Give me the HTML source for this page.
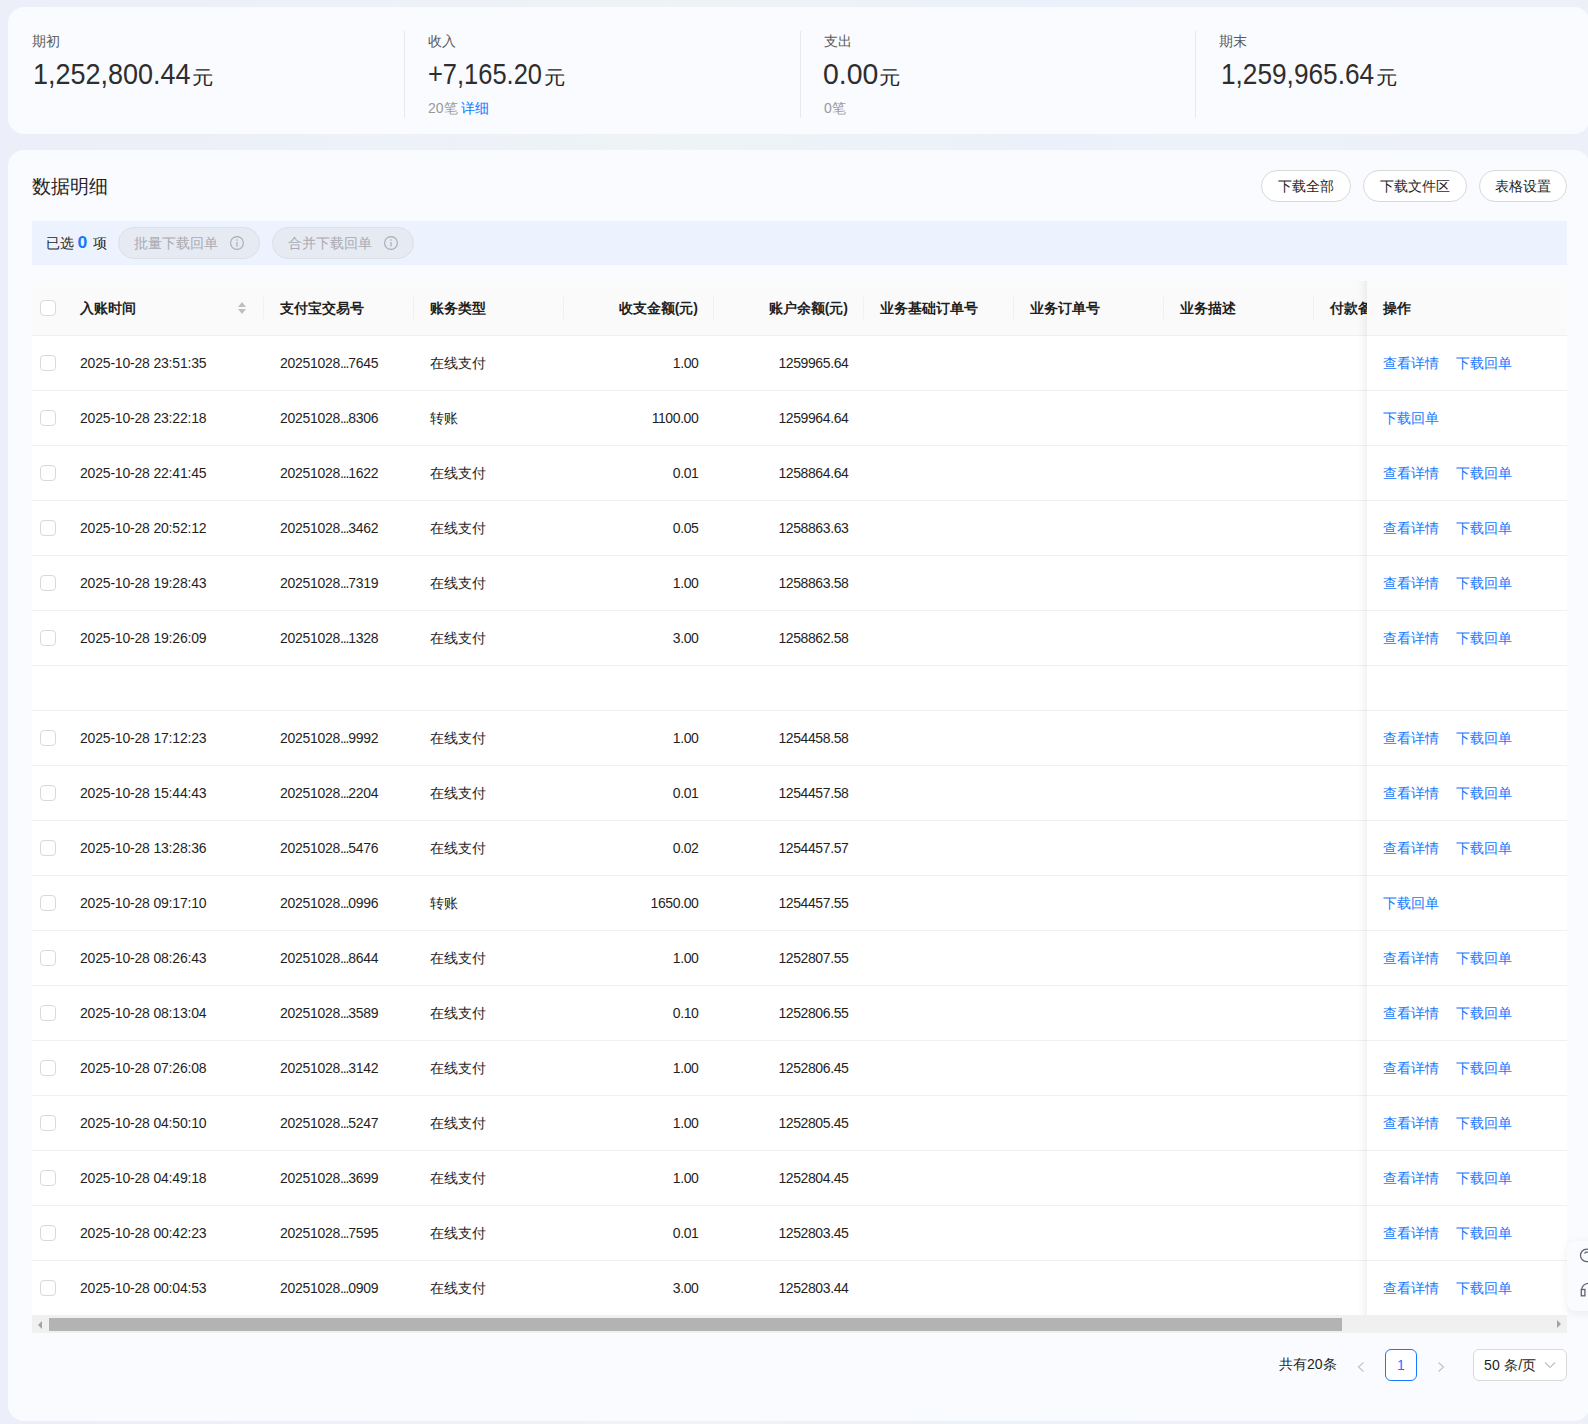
<!DOCTYPE html>
<html><head><meta charset="utf-8">
<style>
*{box-sizing:border-box;margin:0;padding:0}
html,body{width:1588px;height:1424px;overflow:hidden}
body{font-family:"Liberation Sans",sans-serif;background:linear-gradient(90deg,#eceef9 0%,#edf1f8 25%,#eef3f5 42%,#ebf1fa 65%,#eef0f9 100%);position:relative;color:#1f1f1f;font-size:14px}
.abs{position:absolute}
.card{position:absolute;background:#fafbfe;border-radius:16px}
#c1{left:8px;top:7px;width:1582px;height:127px}
#c2{left:8px;top:150px;width:1582px;height:1271px}
.div{position:absolute;top:31px;width:1px;height:87px;background:#e8e9ee}
.lbl{position:absolute;top:30.5px;font-size:14px;color:#595959;line-height:20px;white-space:nowrap}
.num{position:absolute;top:54px;font-size:30px;color:#2e2e2e;line-height:40px;white-space:nowrap;transform-origin:0 0}
.yy{position:absolute;top:64px;font-size:20px;line-height:30px;color:#262626;transform:scale(1.05,0.93);transform-origin:0 0}
.sub{position:absolute;top:100px;font-size:14px;color:#999;line-height:16px;white-space:nowrap}
.sub a{color:#1677ff;text-decoration:none}
.btn{position:absolute;top:170px;height:32px;border:1px solid #d9d9d9;border-radius:16px;background:#fff;font-size:14px;line-height:30px;text-align:center;color:#1f1f1f}
#bar{left:32px;top:221px;width:1535px;height:44px;background:#edf3fe}
.pill{position:absolute;top:227px;height:32px;border:1px solid #dcdfe6;border-radius:16px;background:#e6eaf3;color:#a8abb3;font-size:14px;line-height:30px;white-space:nowrap}
#thead{left:32px;top:281px;width:1535px;height:55px;background:#fafafa;border-bottom:1px solid #f0f0f0;border-radius:8px 0 0 0}
.th{position:absolute;top:300px;font-weight:bold;font-size:14px;line-height:16px;white-space:nowrap;color:#1f1f1f}
.sep{position:absolute;top:297px;width:1px;height:22px;background:#f0f0f0}
.row{position:absolute;left:32px;width:1535px;background:#fff;border-bottom:1px solid #f0f0f0}
.cb{position:absolute;left:8px;width:16px;height:16px;border:1px solid #d9d9d9;border-radius:4px;background:#fff}
.td{position:absolute;line-height:16px;white-space:nowrap;font-size:14px;color:#1f1f1f}
.r{text-align:right}
.lk{color:#1677ff}
</style></head><body>
<div class="card" id="c1"></div>
<div class="div" style="left:404px"></div>
<div class="div" style="left:800px"></div>
<div class="div" style="left:1195px"></div>
<div class="lbl" style="left:32px">期初</div>
<div class="num" style="left:33.2px;transform:scaleX(0.899)">1,252,800.44</div>
<div class="yy" style="left:191.7px">元</div>
<div class="lbl" style="left:428px">收入</div>
<div class="num" style="left:428px;transform:scaleX(0.849)">+7,165.20</div>
<div class="yy" style="left:544px">元</div>
<div class="sub" style="left:428px">20笔 <a>详细</a></div>
<div class="lbl" style="left:824px">支出</div>
<div class="num" style="left:822.9px;transform:scaleX(0.946)">0.00</div>
<div class="yy" style="left:879.4px">元</div>
<div class="sub" style="left:824px">0笔</div>
<div class="lbl" style="left:1219px">期末</div>
<div class="num" style="left:1220.9px;transform:scaleX(0.874)">1,259,965.64</div>
<div class="yy" style="left:1375.9px">元</div>

<div class="card" id="c2"></div>
<div class="abs" style="left:32px;top:176px;font-size:18.5px;line-height:22px;color:#1f1f1f">数据明细</div>
<div class="btn" style="left:1261px;width:90px">下载全部</div>
<div class="btn" style="left:1363px;width:104px">下载文件区</div>
<div class="btn" style="left:1479px;width:88px">表格设置</div>

<div class="abs" id="bar"></div>
<div class="abs" style="left:46px;top:234px;font-size:14px;line-height:18px;white-space:nowrap">已选 <b style="color:#1677ff;font-size:16px;display:inline-block;transform:scaleX(1.1);margin:0 1.5px 0 0.5px">0</b> 项</div>
<div class="pill" style="left:118px;width:142px;padding-left:15px">批量下载回单</div>
<svg class="abs" style="left:230px;top:236px" width="14" height="14" viewBox="0 0 14 14"><circle cx="7" cy="7" r="6.4" fill="none" stroke="#a8abb3" stroke-width="1.1"/><path d="M7 6 V10.5" stroke="#a8abb3" stroke-width="1.2"/><circle cx="7" cy="4" r="0.8" fill="#a8abb3"/></svg>
<div class="pill" style="left:272px;width:142px;padding-left:15px">合并下载回单</div>
<svg class="abs" style="left:384px;top:236px" width="14" height="14" viewBox="0 0 14 14"><circle cx="7" cy="7" r="6.4" fill="none" stroke="#a8abb3" stroke-width="1.1"/><path d="M7 6 V10.5" stroke="#a8abb3" stroke-width="1.2"/><circle cx="7" cy="4" r="0.8" fill="#a8abb3"/></svg>

<div class="abs" id="thead"></div>
<div class="cb" style="left:40px;top:300px"></div>
<div class="th" style="left:80px">入账时间</div>
<svg class="abs" style="left:237px;top:301px" width="10" height="14" viewBox="0 0 10 14"><path d="M1 6 L5 1 L9 6 Z M1 8 L5 13 L9 8 Z" fill="#bfbfbf"/></svg>
<div class="sep" style="left:263px"></div>
<div class="th" style="left:280px">支付宝交易号</div>
<div class="sep" style="left:413px"></div>
<div class="th" style="left:430px">账务类型</div>
<div class="sep" style="left:563px"></div>
<div class="th" style="right:890px;text-align:right">收支金额(元)</div>
<div class="sep" style="left:713px"></div>
<div class="th" style="right:740px;text-align:right">账户余额(元)</div>
<div class="sep" style="left:863px"></div>
<div class="th" style="left:880px">业务基础订单号</div>
<div class="sep" style="left:1013px"></div>
<div class="th" style="left:1030px">业务订单号</div>
<div class="sep" style="left:1163px"></div>
<div class="th" style="left:1180px">业务描述</div>
<div class="sep" style="left:1313px"></div>
<div class="th" style="left:1330px">付款备注</div>
<div id="rows">
<div class="row" style="top:336px;height:55px"></div>
<div class="row" style="top:391px;height:55px"></div>
<div class="row" style="top:446px;height:55px"></div>
<div class="row" style="top:501px;height:55px"></div>
<div class="row" style="top:556px;height:55px"></div>
<div class="row" style="top:611px;height:55px"></div>
<div class="row" style="top:666px;height:45px"></div>
<div class="row" style="top:711px;height:55px"></div>
<div class="row" style="top:766px;height:55px"></div>
<div class="row" style="top:821px;height:55px"></div>
<div class="row" style="top:876px;height:55px"></div>
<div class="row" style="top:931px;height:55px"></div>
<div class="row" style="top:986px;height:55px"></div>
<div class="row" style="top:1041px;height:55px"></div>
<div class="row" style="top:1096px;height:55px"></div>
<div class="row" style="top:1151px;height:55px"></div>
<div class="row" style="top:1206px;height:55px"></div>
<div class="row" style="top:1261px;height:55px"></div>
<div class="cb" style="left:40px;top:355px"></div>
<div class="td" style="left:80px;top:355px;letter-spacing:-0.19px">2025-10-28 23:51:35</div>
<div class="td" style="left:280px;top:355px;letter-spacing:-0.3px">20251028<span style="letter-spacing:-1.1px">...</span>7645</div>
<div class="td" style="left:430px;top:355px">在线支付</div>
<div class="td r" style="right:889.6px;top:355px;letter-spacing:-0.4px">1.00</div>
<div class="td r" style="right:739.6px;top:355px;letter-spacing:-0.4px">1259965.64</div>
<div class="cb" style="left:40px;top:410px"></div>
<div class="td" style="left:80px;top:410px;letter-spacing:-0.19px">2025-10-28 23:22:18</div>
<div class="td" style="left:280px;top:410px;letter-spacing:-0.3px">20251028<span style="letter-spacing:-1.1px">...</span>8306</div>
<div class="td" style="left:430px;top:410px">转账</div>
<div class="td r" style="right:889.6px;top:410px;letter-spacing:-0.4px">1100.00</div>
<div class="td r" style="right:739.6px;top:410px;letter-spacing:-0.4px">1259964.64</div>
<div class="cb" style="left:40px;top:465px"></div>
<div class="td" style="left:80px;top:465px;letter-spacing:-0.19px">2025-10-28 22:41:45</div>
<div class="td" style="left:280px;top:465px;letter-spacing:-0.3px">20251028<span style="letter-spacing:-1.1px">...</span>1622</div>
<div class="td" style="left:430px;top:465px">在线支付</div>
<div class="td r" style="right:889.6px;top:465px;letter-spacing:-0.4px">0.01</div>
<div class="td r" style="right:739.6px;top:465px;letter-spacing:-0.4px">1258864.64</div>
<div class="cb" style="left:40px;top:520px"></div>
<div class="td" style="left:80px;top:520px;letter-spacing:-0.19px">2025-10-28 20:52:12</div>
<div class="td" style="left:280px;top:520px;letter-spacing:-0.3px">20251028<span style="letter-spacing:-1.1px">...</span>3462</div>
<div class="td" style="left:430px;top:520px">在线支付</div>
<div class="td r" style="right:889.6px;top:520px;letter-spacing:-0.4px">0.05</div>
<div class="td r" style="right:739.6px;top:520px;letter-spacing:-0.4px">1258863.63</div>
<div class="cb" style="left:40px;top:575px"></div>
<div class="td" style="left:80px;top:575px;letter-spacing:-0.19px">2025-10-28 19:28:43</div>
<div class="td" style="left:280px;top:575px;letter-spacing:-0.3px">20251028<span style="letter-spacing:-1.1px">...</span>7319</div>
<div class="td" style="left:430px;top:575px">在线支付</div>
<div class="td r" style="right:889.6px;top:575px;letter-spacing:-0.4px">1.00</div>
<div class="td r" style="right:739.6px;top:575px;letter-spacing:-0.4px">1258863.58</div>
<div class="cb" style="left:40px;top:630px"></div>
<div class="td" style="left:80px;top:630px;letter-spacing:-0.19px">2025-10-28 19:26:09</div>
<div class="td" style="left:280px;top:630px;letter-spacing:-0.3px">20251028<span style="letter-spacing:-1.1px">...</span>1328</div>
<div class="td" style="left:430px;top:630px">在线支付</div>
<div class="td r" style="right:889.6px;top:630px;letter-spacing:-0.4px">3.00</div>
<div class="td r" style="right:739.6px;top:630px;letter-spacing:-0.4px">1258862.58</div>
<div class="cb" style="left:40px;top:730px"></div>
<div class="td" style="left:80px;top:730px;letter-spacing:-0.19px">2025-10-28 17:12:23</div>
<div class="td" style="left:280px;top:730px;letter-spacing:-0.3px">20251028<span style="letter-spacing:-1.1px">...</span>9992</div>
<div class="td" style="left:430px;top:730px">在线支付</div>
<div class="td r" style="right:889.6px;top:730px;letter-spacing:-0.4px">1.00</div>
<div class="td r" style="right:739.6px;top:730px;letter-spacing:-0.4px">1254458.58</div>
<div class="cb" style="left:40px;top:785px"></div>
<div class="td" style="left:80px;top:785px;letter-spacing:-0.19px">2025-10-28 15:44:43</div>
<div class="td" style="left:280px;top:785px;letter-spacing:-0.3px">20251028<span style="letter-spacing:-1.1px">...</span>2204</div>
<div class="td" style="left:430px;top:785px">在线支付</div>
<div class="td r" style="right:889.6px;top:785px;letter-spacing:-0.4px">0.01</div>
<div class="td r" style="right:739.6px;top:785px;letter-spacing:-0.4px">1254457.58</div>
<div class="cb" style="left:40px;top:840px"></div>
<div class="td" style="left:80px;top:840px;letter-spacing:-0.19px">2025-10-28 13:28:36</div>
<div class="td" style="left:280px;top:840px;letter-spacing:-0.3px">20251028<span style="letter-spacing:-1.1px">...</span>5476</div>
<div class="td" style="left:430px;top:840px">在线支付</div>
<div class="td r" style="right:889.6px;top:840px;letter-spacing:-0.4px">0.02</div>
<div class="td r" style="right:739.6px;top:840px;letter-spacing:-0.4px">1254457.57</div>
<div class="cb" style="left:40px;top:895px"></div>
<div class="td" style="left:80px;top:895px;letter-spacing:-0.19px">2025-10-28 09:17:10</div>
<div class="td" style="left:280px;top:895px;letter-spacing:-0.3px">20251028<span style="letter-spacing:-1.1px">...</span>0996</div>
<div class="td" style="left:430px;top:895px">转账</div>
<div class="td r" style="right:889.6px;top:895px;letter-spacing:-0.4px">1650.00</div>
<div class="td r" style="right:739.6px;top:895px;letter-spacing:-0.4px">1254457.55</div>
<div class="cb" style="left:40px;top:950px"></div>
<div class="td" style="left:80px;top:950px;letter-spacing:-0.19px">2025-10-28 08:26:43</div>
<div class="td" style="left:280px;top:950px;letter-spacing:-0.3px">20251028<span style="letter-spacing:-1.1px">...</span>8644</div>
<div class="td" style="left:430px;top:950px">在线支付</div>
<div class="td r" style="right:889.6px;top:950px;letter-spacing:-0.4px">1.00</div>
<div class="td r" style="right:739.6px;top:950px;letter-spacing:-0.4px">1252807.55</div>
<div class="cb" style="left:40px;top:1005px"></div>
<div class="td" style="left:80px;top:1005px;letter-spacing:-0.19px">2025-10-28 08:13:04</div>
<div class="td" style="left:280px;top:1005px;letter-spacing:-0.3px">20251028<span style="letter-spacing:-1.1px">...</span>3589</div>
<div class="td" style="left:430px;top:1005px">在线支付</div>
<div class="td r" style="right:889.6px;top:1005px;letter-spacing:-0.4px">0.10</div>
<div class="td r" style="right:739.6px;top:1005px;letter-spacing:-0.4px">1252806.55</div>
<div class="cb" style="left:40px;top:1060px"></div>
<div class="td" style="left:80px;top:1060px;letter-spacing:-0.19px">2025-10-28 07:26:08</div>
<div class="td" style="left:280px;top:1060px;letter-spacing:-0.3px">20251028<span style="letter-spacing:-1.1px">...</span>3142</div>
<div class="td" style="left:430px;top:1060px">在线支付</div>
<div class="td r" style="right:889.6px;top:1060px;letter-spacing:-0.4px">1.00</div>
<div class="td r" style="right:739.6px;top:1060px;letter-spacing:-0.4px">1252806.45</div>
<div class="cb" style="left:40px;top:1115px"></div>
<div class="td" style="left:80px;top:1115px;letter-spacing:-0.19px">2025-10-28 04:50:10</div>
<div class="td" style="left:280px;top:1115px;letter-spacing:-0.3px">20251028<span style="letter-spacing:-1.1px">...</span>5247</div>
<div class="td" style="left:430px;top:1115px">在线支付</div>
<div class="td r" style="right:889.6px;top:1115px;letter-spacing:-0.4px">1.00</div>
<div class="td r" style="right:739.6px;top:1115px;letter-spacing:-0.4px">1252805.45</div>
<div class="cb" style="left:40px;top:1170px"></div>
<div class="td" style="left:80px;top:1170px;letter-spacing:-0.19px">2025-10-28 04:49:18</div>
<div class="td" style="left:280px;top:1170px;letter-spacing:-0.3px">20251028<span style="letter-spacing:-1.1px">...</span>3699</div>
<div class="td" style="left:430px;top:1170px">在线支付</div>
<div class="td r" style="right:889.6px;top:1170px;letter-spacing:-0.4px">1.00</div>
<div class="td r" style="right:739.6px;top:1170px;letter-spacing:-0.4px">1252804.45</div>
<div class="cb" style="left:40px;top:1225px"></div>
<div class="td" style="left:80px;top:1225px;letter-spacing:-0.19px">2025-10-28 00:42:23</div>
<div class="td" style="left:280px;top:1225px;letter-spacing:-0.3px">20251028<span style="letter-spacing:-1.1px">...</span>7595</div>
<div class="td" style="left:430px;top:1225px">在线支付</div>
<div class="td r" style="right:889.6px;top:1225px;letter-spacing:-0.4px">0.01</div>
<div class="td r" style="right:739.6px;top:1225px;letter-spacing:-0.4px">1252803.45</div>
<div class="cb" style="left:40px;top:1280px"></div>
<div class="td" style="left:80px;top:1280px;letter-spacing:-0.19px">2025-10-28 00:04:53</div>
<div class="td" style="left:280px;top:1280px;letter-spacing:-0.3px">20251028<span style="letter-spacing:-1.1px">...</span>0909</div>
<div class="td" style="left:430px;top:1280px">在线支付</div>
<div class="td r" style="right:889.6px;top:1280px;letter-spacing:-0.4px">3.00</div>
<div class="td r" style="right:739.6px;top:1280px;letter-spacing:-0.4px">1252803.44</div>
<div class="abs" style="left:1337px;top:281px;width:30px;height:1034px;box-shadow:inset -10px 0 8px -8px rgba(5,5,5,0.08)"></div>
<div class="abs" style="left:1367px;top:281px;width:200px;height:1034px;background:#fff;overflow:hidden">
<div class="abs" style="left:0;top:0;width:200px;height:55px;background:#fafafa;border-bottom:1px solid #f0f0f0"></div>
<div class="th" style="left:16px;top:19px">操作</div>
<div class="abs" style="left:0;top:55px;width:200px;height:55px;border-bottom:1px solid #f0f0f0"></div>
<div class="td lk" style="left:16px;top:74px">查看详情</div>
<div class="td lk" style="left:88.5px;top:74px">下载回单</div>
<div class="abs" style="left:0;top:110px;width:200px;height:55px;border-bottom:1px solid #f0f0f0"></div>
<div class="td lk" style="left:16px;top:129px">下载回单</div>
<div class="abs" style="left:0;top:165px;width:200px;height:55px;border-bottom:1px solid #f0f0f0"></div>
<div class="td lk" style="left:16px;top:184px">查看详情</div>
<div class="td lk" style="left:88.5px;top:184px">下载回单</div>
<div class="abs" style="left:0;top:220px;width:200px;height:55px;border-bottom:1px solid #f0f0f0"></div>
<div class="td lk" style="left:16px;top:239px">查看详情</div>
<div class="td lk" style="left:88.5px;top:239px">下载回单</div>
<div class="abs" style="left:0;top:275px;width:200px;height:55px;border-bottom:1px solid #f0f0f0"></div>
<div class="td lk" style="left:16px;top:294px">查看详情</div>
<div class="td lk" style="left:88.5px;top:294px">下载回单</div>
<div class="abs" style="left:0;top:330px;width:200px;height:55px;border-bottom:1px solid #f0f0f0"></div>
<div class="td lk" style="left:16px;top:349px">查看详情</div>
<div class="td lk" style="left:88.5px;top:349px">下载回单</div>
<div class="abs" style="left:0;top:385px;width:200px;height:45px;border-bottom:1px solid #f0f0f0"></div>
<div class="abs" style="left:0;top:430px;width:200px;height:55px;border-bottom:1px solid #f0f0f0"></div>
<div class="td lk" style="left:16px;top:449px">查看详情</div>
<div class="td lk" style="left:88.5px;top:449px">下载回单</div>
<div class="abs" style="left:0;top:485px;width:200px;height:55px;border-bottom:1px solid #f0f0f0"></div>
<div class="td lk" style="left:16px;top:504px">查看详情</div>
<div class="td lk" style="left:88.5px;top:504px">下载回单</div>
<div class="abs" style="left:0;top:540px;width:200px;height:55px;border-bottom:1px solid #f0f0f0"></div>
<div class="td lk" style="left:16px;top:559px">查看详情</div>
<div class="td lk" style="left:88.5px;top:559px">下载回单</div>
<div class="abs" style="left:0;top:595px;width:200px;height:55px;border-bottom:1px solid #f0f0f0"></div>
<div class="td lk" style="left:16px;top:614px">下载回单</div>
<div class="abs" style="left:0;top:650px;width:200px;height:55px;border-bottom:1px solid #f0f0f0"></div>
<div class="td lk" style="left:16px;top:669px">查看详情</div>
<div class="td lk" style="left:88.5px;top:669px">下载回单</div>
<div class="abs" style="left:0;top:705px;width:200px;height:55px;border-bottom:1px solid #f0f0f0"></div>
<div class="td lk" style="left:16px;top:724px">查看详情</div>
<div class="td lk" style="left:88.5px;top:724px">下载回单</div>
<div class="abs" style="left:0;top:760px;width:200px;height:55px;border-bottom:1px solid #f0f0f0"></div>
<div class="td lk" style="left:16px;top:779px">查看详情</div>
<div class="td lk" style="left:88.5px;top:779px">下载回单</div>
<div class="abs" style="left:0;top:815px;width:200px;height:55px;border-bottom:1px solid #f0f0f0"></div>
<div class="td lk" style="left:16px;top:834px">查看详情</div>
<div class="td lk" style="left:88.5px;top:834px">下载回单</div>
<div class="abs" style="left:0;top:870px;width:200px;height:55px;border-bottom:1px solid #f0f0f0"></div>
<div class="td lk" style="left:16px;top:889px">查看详情</div>
<div class="td lk" style="left:88.5px;top:889px">下载回单</div>
<div class="abs" style="left:0;top:925px;width:200px;height:55px;border-bottom:1px solid #f0f0f0"></div>
<div class="td lk" style="left:16px;top:944px">查看详情</div>
<div class="td lk" style="left:88.5px;top:944px">下载回单</div>
<div class="abs" style="left:0;top:980px;width:200px;height:55px;border-bottom:1px solid #f0f0f0"></div>
<div class="td lk" style="left:16px;top:999px">查看详情</div>
<div class="td lk" style="left:88.5px;top:999px">下载回单</div>
</div>
</div><!--/rows-->

<!-- scrollbar -->
<div class="abs" style="left:32px;top:1315px;width:1535px;height:18px;background:#f0f0f0"></div>
<div class="abs" style="left:49px;top:1318px;width:1293px;height:13px;background:#b3b3b3"></div>
<svg class="abs" style="left:37px;top:1320.5px" width="6" height="8" viewBox="0 0 6 8"><path d="M5 0 L1 4 L5 8 Z" fill="#a3a3a3"/></svg>
<svg class="abs" style="left:1556px;top:1320px" width="6" height="8" viewBox="0 0 6 8"><path d="M1 0 L5 4 L1 8 Z" fill="#a3a3a3"/></svg>
<!-- pagination -->
<div class="abs" style="left:1279px;top:1356px;font-size:14px;line-height:16px;white-space:nowrap">共有20条</div>
<svg class="abs" style="left:1356px;top:1361px" width="10" height="12" viewBox="0 0 10 12"><path d="M7.5 1.5 L2.5 6 L7.5 10.5" fill="none" stroke="#c2c2c2" stroke-width="1.1"/></svg>
<div class="abs" style="left:1385px;top:1349px;width:32px;height:32px;border:1px solid #1677ff;border-radius:6px;color:#1677ff;text-align:center;line-height:30px;font-size:14px;background:#fff">1</div>
<svg class="abs" style="left:1436px;top:1361px" width="10" height="12" viewBox="0 0 10 12"><path d="M2.5 1.5 L7.5 6 L2.5 10.5" fill="none" stroke="#c2c2c2" stroke-width="1.1"/></svg>
<div class="abs" style="left:1473px;top:1349px;width:94px;height:32px;border:1px solid #d9d9d9;border-radius:6px;background:#fff"></div>
<div class="abs" style="left:1484px;top:1357px;font-size:14px;line-height:16px;white-space:nowrap;letter-spacing:0.2px">50 条/页</div>
<svg class="abs" style="left:1544px;top:1361px" width="12" height="8" viewBox="0 0 12 8"><path d="M1 1.5 L6 6.5 L11 1.5" fill="none" stroke="#c0c0c0" stroke-width="1.1"/></svg>
<!-- floating widget -->
<div class="abs" style="left:1567px;top:1241px;width:40px;height:70px;background:#fafbfe;border-radius:8px;box-shadow:0 2px 10px rgba(0,0,0,0.07)"></div>
<svg class="abs" style="left:1567px;top:1236px" width="21" height="80" viewBox="0 0 21 80"><circle cx="19.7" cy="19.4" r="6.2" fill="none" stroke="#5d6278" stroke-width="1.3"/><path d="M17.6 17.6 A2.3 2.3 0 0 1 21 16.4" fill="none" stroke="#5d6278" stroke-width="1.2"/><path d="M14.6 54 A6.8 6.8 0 0 1 21 47.3" fill="none" stroke="#5d6278" stroke-width="1.3"/><rect x="14.3" y="53.5" width="3.6" height="6.3" fill="none" stroke="#5d6278" stroke-width="1.3"/></svg>
</body></html>
